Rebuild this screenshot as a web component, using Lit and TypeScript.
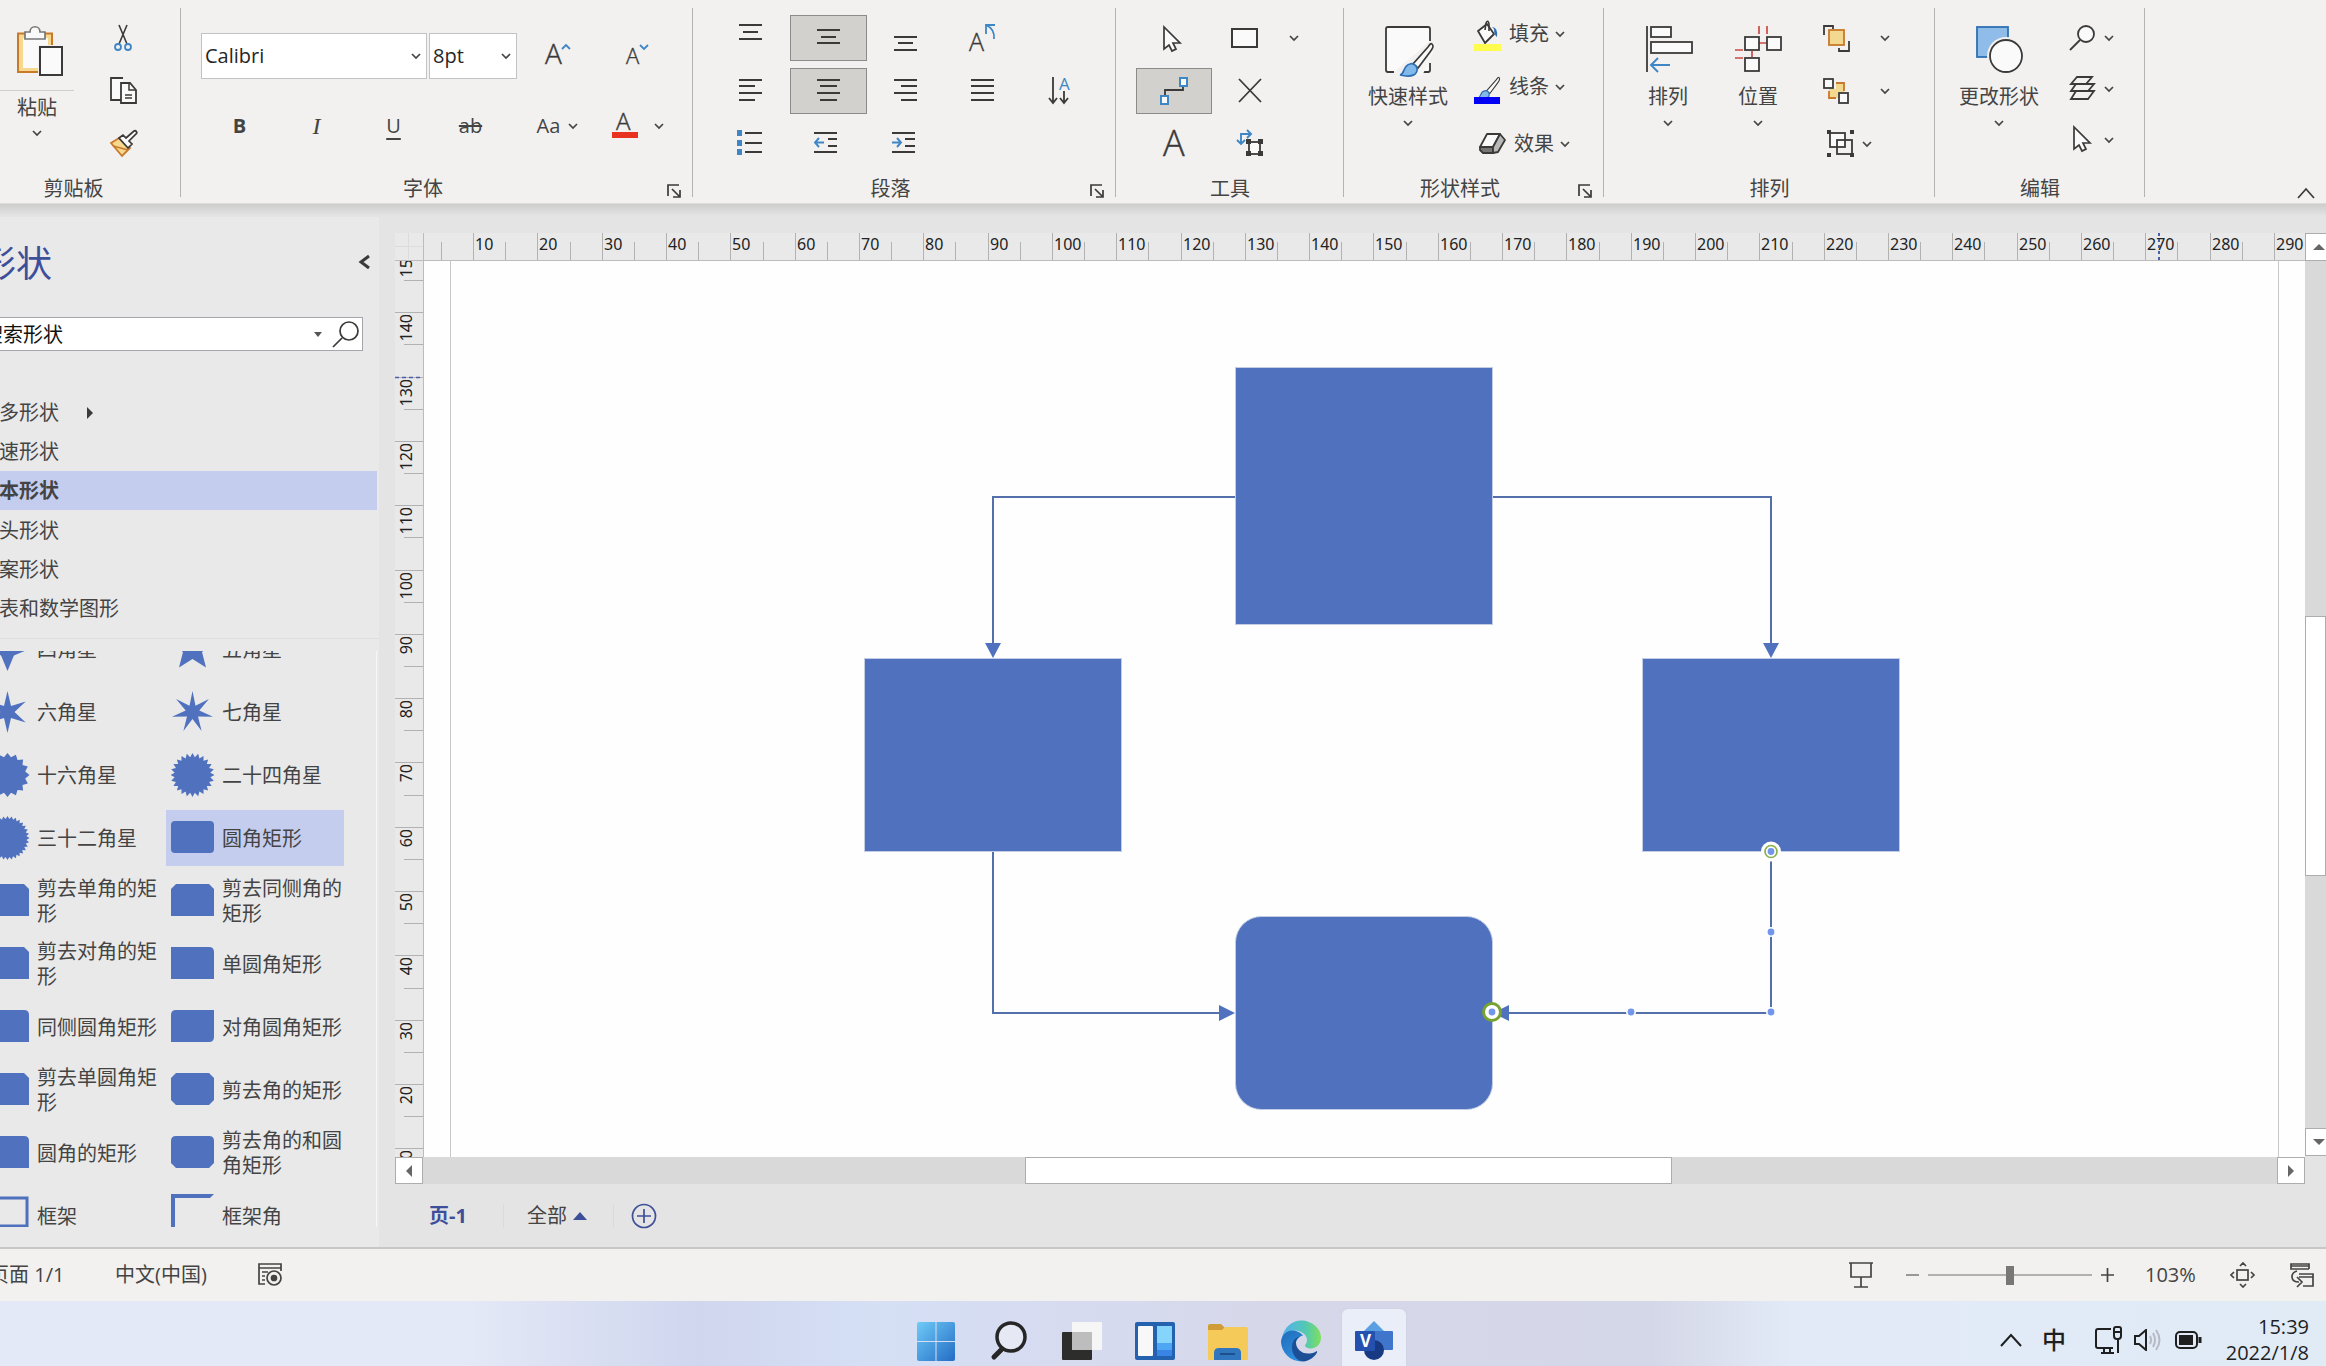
import { LitElement, html, svg, css, nothing, type SVGTemplateResult, type TemplateResult } from "lit";
import { customElement } from "lit/decorators.js";
import { classMap } from "lit/directives/class-map.js";

const icon = (w: number, h: number, body: SVGTemplateResult): TemplateResult =>
  html`<svg class="ic" width=${w} height=${h} viewBox="0 0 ${w} ${h}" aria-hidden="true">${body}</svg>`;

const chevron = html`<svg class="chev" width="12" height="8" viewBox="0 0 12 8" aria-hidden="true">
  <path d="M2 2L6 6L10 2" fill="none" stroke="#444" stroke-width="1.7" />
</svg>`;

const INK = "#3b3a39";
const BLUE = "#3f86c6";

/** Horizontal strokes given as [x1, x2, y] triples. */
const bars = (list: number[][]) => svg`<g stroke=${INK} stroke-width="2">
  ${list.map(([a, b, y]) => svg`<path d="M${a} ${y}H${b}" />`)}</g>`;

const pointer = (x: number, y: number) => svg`<path
  d="M${x} ${y}V${y + 22}L${x + 5} ${y + 18}L${x + 8} ${y + 24}L${x + 12} ${y + 22}L${x + 9} ${y + 16}H${x + 16}Z"
  fill="#fafafa" stroke=${INK} stroke-width="1.7" />`;

const brush = svg`
  <path d="M44 1C46 3 45 5 42 9L30 25L25 21L40 4C42 1 43 0 44 1Z" fill="#fafafa" stroke=${INK} stroke-width="1.7" />
  <path d="M29 25C30 31 25 35 12 32C17 31 15 22 22 21C25 20 28 22 29 25Z" fill="#83b9ea" stroke="#2f6fb3" stroke-width="1.7" />`;

const I = {
  paste: icon(74, 75, svg`
    <path d="M18 18.500H52V57H18Z" fill="#f6d88e" stroke="#c8792a" stroke-width="2" />
    <rect x="23" y="23" width="25" height="30" fill="#fafafa" />
    <rect x="38" y="30" width="28" height="34" fill="#f2f1ef" />
    <path d="M25 24V17H30C30 10 40 10 40 17H45V24Z" fill="#fafafa" stroke="#777" stroke-width="1.7" />
    <rect x="40" y="32" width="22" height="28" fill="#fafafa" stroke=${INK} stroke-width="2" />`),
  cut: icon(36, 36, svg`
    <path d="M14 5L22 24M22 5L14 24" stroke=${INK} stroke-width="1.6" />
    <circle cx="13" cy="27" r="3" fill="none" stroke=${BLUE} stroke-width="1.8" />
    <circle cx="23" cy="27" r="3" fill="none" stroke=${BLUE} stroke-width="1.8" />`),
  copy: icon(36, 36, svg`
    <path d="M16 27H6V5H18" fill="#fafafa" stroke=${INK} stroke-width="1.8" />
    <path d="M16 10H25L31 17V30H16Z" fill="#fafafa" stroke=${INK} stroke-width="1.8" />
    <path d="M24 10V17H31M20 22H27M20 25H27" fill="none" stroke=${INK} stroke-width="1.5" />`),
  painter: icon(36, 36, svg`
    <path d="M6 17L14 12L25 22L17 30Z" fill="#f6d88e" stroke="#c8792a" stroke-width="1.8" />
    <path d="M8 20L23 24" stroke="#c8792a" stroke-width="1.5" />
    <path d="M14 12L18 9L21 12L29 5C31 4 33 7 31 8L24 15L27 18L23 22Z" fill="#fafafa" stroke=${INK} stroke-width="1.7" />`),
  grow: icon(60, 46, svg`<text x="17" y="31" class="ga" font-size="28">A</text>
    <path d="M34 16L38 12L42 16" fill="none" stroke=${BLUE} stroke-width="1.8" />`),
  shrink: icon(60, 46, svg`<text x="19" y="31" class="ga" font-size="22">A</text>
    <path d="M33 12L37 16L41 12" fill="none" stroke=${BLUE} stroke-width="1.8" />`),
  fontColor: icon(36, 46, svg`<text x="9" y="27" class="ga" font-size="24">A</text>
    <rect x="5" y="29" width="26" height="6" fill="#e8321f" />`),
  alignTop: icon(76, 46, bars([[25, 48, 10], [29, 44, 17], [25, 48, 24]])),
  alignMid: icon(74, 44, bars([[25, 48, 14], [29, 44, 21], [25, 48, 27]])),
  alignBottom: icon(76, 46, bars([[26, 49, 22], [30, 45, 28], [26, 49, 35]])),
  rotateText: icon(76, 46, svg`<text x="24" y="36" class="ga" font-size="25">A</text>
    <path d="M50 10H41V19M41 10Q50 14 49 24" fill="none" stroke=${BLUE} stroke-width="1.8" />`),
  left: icon(76, 46, bars([[25, 48, 12], [25, 41, 18], [25, 48, 25], [25, 41, 32]])),
  center: icon(74, 44, bars([[25, 48, 11], [28, 45, 17], [25, 48, 24], [28, 45, 31]])),
  right: icon(76, 46, bars([[26, 49, 12], [33, 49, 18], [26, 49, 25], [33, 49, 32]])),
  justify: icon(76, 46, bars([[26, 49, 12], [26, 49, 18], [26, 49, 25], [26, 49, 32]])),
  sort: icon(76, 46, svg`
    <path d="M31 9V34M27 30L31 35L35 30M42 23V34M38 30L42 35L46 30" fill="none" stroke=${INK} stroke-width="1.8" />
    <text x="37" y="22" font-size="17" fill=${BLUE} class="fa">A</text>`),
  bullets: icon(76, 46, svg`<path d="M23 9h5v6h-5zM23 19h5v6h-5zM23 28h5v6h-5z" fill=${BLUE} />
    ${bars([[31, 48, 12], [31, 48, 22], [31, 48, 31]])}`),
  outdent: icon(76, 46, svg`${bars([[23, 46, 12], [37, 46, 18], [37, 46, 25], [23, 46, 31]])}
    <path d="M33 21.500H25M28 17L24 21.500L28 26" fill="none" stroke=${BLUE} stroke-width="1.9" />`),
  indent: icon(76, 46, svg`${bars([[24, 47, 12], [37, 47, 18], [37, 47, 25], [24, 47, 31]])}
    <path d="M24 21.500H32M29 17L33 21.500L29 26" fill="none" stroke=${BLUE} stroke-width="1.9" />`),
  arrow: icon(76, 46, pointer(28, 12)),
  rect: icon(76, 46, svg`<rect x="20" y="14" width="25" height="18" fill="#fafafa" stroke=${INK} stroke-width="2" />`),
  connector: icon(74, 44, svg`<path d="M46 17V21H28V27" fill="none" stroke=${INK} stroke-width="1.8" />
    <rect x="43" y="9" width="7" height="8" fill="#fafafa" stroke=${BLUE} stroke-width="2" />
    <rect x="24" y="27" width="7" height="8" fill="#fafafa" stroke=${BLUE} stroke-width="2" />`),
  cross: icon(76, 46, svg`<path d="M27 11L49 34M49 11L27 34" stroke=${INK} stroke-width="1.8" />`),
  text: icon(76, 46, svg`<text x="27" y="35" class="ga" font-size="36">A</text>`),
  points: icon(76, 46, svg`
    <path d="M29 22V13H38M35 9L39 13L35 17M25 19L29 23L33 19" fill="none" stroke=${BLUE} stroke-width="1.9" />
    <rect x="37" y="21" width="11" height="12" fill="#fafafa" stroke=${INK} stroke-width="1.8" />
    <path d="M34 18h5v5h-5zM46 18h5v5h-5zM34 30h5v5h-5zM46 30h5v5h-5z" fill=${INK} />`),
  quick: icon(84, 67, svg`
    <path d="M28 57H22Q20 57 20 55V14Q20 12 22 12H62Q64 12 64 14V26M64 48V55Q64 57 62 57H52" fill="#fafafa" stroke=${INK} stroke-width="1.8" />
    <g transform="translate(22 28)"><path d="M40 2L24 20L10 33H34L46 8Z" fill="#f6f6f5" />${brush}</g>`),
  fill: icon(28, 36, svg`
    <path d="M4 16L13 9L20 19L11 28Z" fill="#fafafa" stroke=${INK} stroke-width="1.8" stroke-linejoin="round" />
    <path d="M11 15L12 8Q14 4 15 9V16" fill="none" stroke=${INK} stroke-width="1.6" />
    <path d="M18 12Q24 12 23 22Q20 20 20 14Z" fill="#2f6fb3" />
    <rect x="0" y="29" width="27" height="7" fill="#fffc4e" />`),
  line: icon(28, 36, svg`
    <g transform="translate(-4 9) scale(.66)">${brush}</g>
    <rect x="0" y="29" width="26" height="7" fill="#0000f5" />`),
  effect: icon(28, 28, svg`
    <path d="M8 4H21L14 17H1Z" fill="#fafafa" stroke=${INK} stroke-width="1.8" stroke-linejoin="round" />
    <path d="M1 17H14V23H4L1 20Z" fill="#777" stroke=${INK} stroke-width="1.8" stroke-linejoin="round" />
    <path d="M21 4L26 10L19 22L14 23V17Z" fill="#b8b8b8" stroke=${INK} stroke-width="1.8" stroke-linejoin="round" />`),
  align: icon(60, 67, svg`
    <path d="M9 11V57" stroke=${INK} stroke-width="1.8" />
    <rect x="13" y="12" width="20" height="10" fill="#fafafa" stroke=${INK} stroke-width="1.8" />
    <rect x="13" y="27" width="41" height="11" fill="#fafafa" stroke=${INK} stroke-width="1.8" />
    <path d="M32 50H13M20 43L13 50L20 57" fill="none" stroke=${BLUE} stroke-width="1.9" />`),
  position: icon(60, 67, svg`
    <path d="M31 11V19M39 11V19M31 28H39M7 35H15M7 43H15M24 36V42" stroke="#cc4b46" stroke-width="1.7" fill="none" />
    <g fill="#fafafa" stroke=${INK} stroke-width="1.8"><rect x="17" y="22" width="14" height="13" />
    <rect x="39" y="22" width="14" height="13" /><rect x="17" y="43" width="14" height="13" /></g>`),
  front: icon(36, 46, svg`
    <path d="M6 20V11H15V14M31 26V36H21V33" fill="none" stroke=${INK} stroke-width="1.8" />
    <rect x="11" y="15" width="15" height="15" fill="#f3d88f" stroke="#c8792a" stroke-width="1.8" />`),
  back: icon(36, 46, svg`
    <path d="M18 15H26V25H20V30H11V21H18Z" fill="#f3d88f" /><path d="M18 15H26V23M18 30H11V23" fill="none" stroke="#c8792a" stroke-width="1.8" />
    <rect x="6" y="11" width="9" height="9" fill="#fafafa" stroke=${INK} stroke-width="1.8" />
    <rect x="21" y="25" width="9" height="10" fill="#fafafa" stroke=${INK} stroke-width="1.8" />`),
  group: icon(36, 46, svg`
    <rect x="12" y="12" width="15" height="14" fill="#fafafa" stroke=${INK} stroke-width="1.8" />
    <rect x="19" y="19" width="15" height="14" fill="none" stroke=${INK} stroke-width="1.8" />
    <path d="M9 9h4v4h-4zM32 9h4v4h-4zM9 32h4v4h-4zM32 32h4v4h-4z" fill=${INK} />`),
  change: icon(90, 67, svg`
    <rect x="23" y="12" width="31" height="30" fill="#8fbce8" stroke="#2f6fb3" stroke-width="1.8" />
    <circle cx="52" cy="41" r="19" fill="#f2f1ef" /><circle cx="52" cy="41" r="16" fill="#fafafa" stroke=${INK} stroke-width="1.8" />`),
  find: icon(30, 46, svg`<circle cx="18" cy="19" r="8" fill="#fafafa" stroke=${INK} stroke-width="1.8" />
    <path d="M12 25L2 35" stroke=${INK} stroke-width="1.8" />`),
  layers: icon(30, 46, svg`<g fill="#f2f1ef" stroke=${INK} stroke-width="1.8">
    <path d="M8 25H26L20 33H3Z" /><path d="M8 18H26L20 25H3Z" /><path d="M9 11H24L18 18H3Z" /></g>`),
  select: icon(30, 46, pointer(6, 10)),
  launcher: icon(14, 14, svg`<path d="M1 12V1H12M5 5L12 12M13 6V13H6" fill="none" stroke=${INK} stroke-width="1.7" />`),
  up: icon(18, 12, svg`<path d="M1 11L9 2L17 11" fill="none" stroke=${INK} stroke-width="1.7" />`),
  glass: icon(28, 28, svg`<circle cx="17" cy="11" r="9" fill="none" stroke="#3b3a39" stroke-width="1.7" />
    <path d="M10 18L1 27" stroke="#3b3a39" stroke-width="1.7" />`),
};

/** Points of an n-pointed star centred in a 44px box. */
const star = (n: number, outer: number, inner: number) => {
  const pts: string[] = [];
  for (let i = 0; i < n * 2; i++) {
    const r = i % 2 ? inner : outer;
    const a = (Math.PI * i) / n - Math.PI / 2;
    pts.push(`${(21.5 + r * Math.cos(a)).toFixed(1)},${(22 + r * Math.sin(a)).toFixed(1)}`);
  }
  return svg`<polygon points=${pts.join(" ")} />`;
};
const outline = (d: string) => svg`<path d=${d} />`;

const SHAPES: { name: string; art: SVGTemplateResult; selected?: boolean }[] = [
  { name: "四角星", art: star(4, 22, 9) },
  { name: "五角星", art: star(5, 23, 10) },
  { name: "六角星", art: star(6, 21, 7) },
  { name: "七角星", art: star(7, 21, 7) },
  { name: "十六角星", art: star(16, 22, 18) },
  { name: "二十四角星", art: star(24, 22, 18) },
  { name: "三十二角星", art: star(32, 22, 19) },
  { name: "圆角矩形", art: svg`<rect x="0" y="5" width="43" height="32" rx="4" />`, selected: true },
  { name: "剪去单角的矩形", art: outline("M0 5H38L43 10V37H0Z") },
  { name: "剪去同侧角的矩形", art: outline("M5 5H38L43 10V37H0V10Z") },
  { name: "剪去对角的矩形", art: outline("M0 5H38L43 10V37H5L0 32Z") },
  { name: "单圆角矩形", art: outline("M0 5H38Q43 5 43 10V37H0Z") },
  { name: "同侧圆角矩形", art: outline("M0 10Q0 5 5 5H38Q43 5 43 10V37H0Z") },
  { name: "对角圆角矩形", art: outline("M5 5H43V32Q43 37 38 37H0V10Q0 5 5 5Z") },
  { name: "剪去单圆角矩形", art: outline("M5 5H38L43 10V37H0V10Q0 5 5 5Z") },
  { name: "剪去角的矩形", art: outline("M5 5H38L43 10V32L38 37H5L0 32V10Z") },
  { name: "圆角的矩形", art: outline("M5 5H38Q43 5 43 10V37H0V10Q0 5 5 5Z") },
  { name: "剪去角的和圆角矩形", art: outline("M5 5H38Q43 5 43 10V32L38 37H5L0 32V10Q0 5 5 5Z") },
  { name: "框架", art: svg`<rect x="1" y="4" width="40" height="28" fill="none" stroke="#4f71be" stroke-width="3" />` },
  { name: "框架角", art: outline("M0 0H43L39 4H4V40L0 44Z") },
];

const CATEGORIES = ["更多形状", "快速形状", "基本形状", "箭头形状", "图案形状", "图表和数学图形"];

const PITCH = 64.31;

@customElement("visio-ribbon")
class VisioRibbon extends LitElement {
  static styles = css`
    :host { display: block; background: #f2f1ef; border-bottom: 1px solid #dcdbd9; color: #444;
      font: 20px/24px "Open Sans", "Noto Sans CJK SC", sans-serif; }
    .ribbon { display: flex; height: 203px; }
    button { border: 0; background: none; padding: 0; margin: 0; color: inherit; font: inherit; display: flex;
      align-items: center; justify-content: center; box-sizing: border-box; }
    svg { display: block; flex: none; overflow: visible; }
    .group { flex: none; box-sizing: border-box; display: flex; flex-direction: column; padding-top: 15px;
      background: linear-gradient(#b4b4b4, #b4b4b4) right 8px / 1px 189px no-repeat; }
    .body { flex: 1; display: flex; align-items: flex-start; }
    .foot { display: flex; height: 28px; align-items: center; }
    .foot span { flex: 1; text-align: center; }
    .foot button { width: 28px; height: 28px; padding: 4px 10px 0 0; }
    .clip { width: 181px; } .clip .foot { padding-right: 34px; }
    .font { width: 512px; } .para { width: 423px; } .tools { width: 228px; }
    .style { width: 260px; } .arrange { width: 331px; } .edit { width: 210px; }
    .para .body, .tools .body { padding-left: 20px; }
    .style .body { padding-left: 22px; } .arrange .body { padding-left: 34px; } .edit .body { padding-left: 19px; }
    .big { flex-direction: column; }
    .big span { line-height: 30px; white-space: nowrap; }
    .big .chev { margin: 7px 0; }
    .paste { width: 74px; }
    .paste .ic { border-bottom: 1px solid #cfcfcf; }
    .paste span { line-height: 34px; }
    .paste .chev { margin: 4px 0; }
    .three { display: grid; grid-auto-rows: 46px; row-gap: 7px; }
    .clip .three { width: 50px; margin-left: 24px; }
    .pgrid { grid-template-columns: repeat(5, 77px); }
    .pgrid button { width: 77px; height: 46px; }
    .on { background: #d2d1ce; border: 1px solid #8c8b89; }
    .tgrid { grid-template-columns: 76px 76px 12px; }
    .rows { display: flex; flex-direction: column; gap: 24px; padding: 18px 0 0 20px; }
    .row { display: flex; height: 46px; align-items: center; }
    .combo { display: grid; margin-right: 2px; }
    .combo select, .combo .chev { grid-area: 1 / 1; }
    .combo .chev { justify-self: end; align-self: center; margin-right: 5px; }
    select { appearance: none; height: 46px; border: 1px solid #c3c3c3; border-radius: 0; background: #fff; color: #262626;
      padding: 0 3px; font: inherit; font-size: 20px; }
    .face select { width: 226px; } .size select { width: 88px; }
    .gap { width: 9px; } .gap2 { width: 19px; }
    .row .b { width: 77px; height: 46px; }
    .bold { font-weight: 700; } .ital { font-family: "Liberation Serif", serif; font-style: italic; font-size: 24px; }
    .under { text-decoration: underline; text-underline-offset: 5px; text-decoration-thickness: 2px; }
    .strike { text-decoration: line-through; }
    .case { width: 60px; gap: 7px; }
    .drop { width: 18px; height: 46px; margin-left: 7px; }
    .ga { font-family: "Open Sans", sans-serif; font-weight: 300; fill: #3b3a39; stroke: #3b3a39; stroke-width: 0.4px; }
    .fa { font-family: "Open Sans", sans-serif; }
    .side { margin-left: 24px; }
    .side button { justify-content: flex-start; }
    .lab { align-items: flex-start; gap: 5px; }
    .lab span { margin-left: 2px; line-height: 38px; }
    .lab .chev { margin-top: 15px; }
    .lab.mid { align-items: center; padding-left: 5px; }
    .lab.mid .chev { margin-top: 0; }
    .a2 { margin-left: 30px; }
    .wide { gap: 25px; } .near { gap: 7px; } .five { gap: 5px; }
    .rest { flex: 1; display: flex; justify-content: flex-end; align-items: flex-end; padding: 0 11px 4px 0; }
    .w84 { width: 84px; } .w60 { width: 60px; } .w90 { width: 90px; }
    .edit .three { row-gap: 5px; }
  `;

  private btn(label: string, body: unknown, cls = "") {
    return html`<button class=${cls} aria-label=${label} title=${label}>${body}</button>`;
  }
  private foot(name: string, launcher = false) {
    return html`<div class="foot"><span>${name}</span>${launcher ? this.btn(name + "设置", I.launcher) : nothing}</div>`;
  }

  render() {
    const b = this.btn.bind(this);
    return html`<div class="ribbon" role="toolbar">
      <section class="group clip">
        <div class="body">
          <button class="big paste">${I.paste}<span>粘贴</span>${chevron}</button>
          <div class="three">${b("剪切", I.cut)}${b("复制", I.copy)}${b("格式刷", I.painter)}</div>
        </div>
        ${this.foot("剪贴板")}
      </section>
      <section class="group font">
        <div class="body"><div class="rows">
          <div class="row">
            <label class="combo face"><select aria-label="字体"><option>Calibri</option></select>${chevron}</label>
            <label class="combo size"><select aria-label="字号"><option>8pt</option></select>${chevron}</label>
            <span class="gap"></span>${b("增大字号", I.grow)}<span class="gap2"></span>${b("减小字号", I.shrink)}
          </div>
          <div class="row">
            ${b("加粗", "B", "b bold")}${b("倾斜", "I", "b ital")}${b("下划线", "U", "b under")}${b("删除线", "ab", "b strike")}
            <span class="gap2"></span>${b("更改大小写", html`Aa${chevron}`, "case")}<span class="gap2"></span>
            ${b("字体颜色", I.fontColor)}${b("颜色选项", chevron, "drop")}
          </div>
        </div></div>
        ${this.foot("字体", true)}
      </section>
      <section class="group para">
        <div class="body"><div class="three pgrid">
          ${b("顶端对齐", I.alignTop)}${b("中部对齐", I.alignMid, "on")}${b("底端对齐", I.alignBottom)}${b("旋转文本", I.rotateText)}<span></span>
          ${b("左对齐", I.left)}${b("居中", I.center, "on")}${b("右对齐", I.right)}${b("两端对齐", I.justify)}${b("文字方向", I.sort)}
          ${b("项目符号", I.bullets)}${b("减少缩进", I.outdent)}${b("增加缩进", I.indent)}
        </div></div>
        ${this.foot("段落", true)}
      </section>
      <section class="group tools">
        <div class="body"><div class="three tgrid">
          ${b("指针工具", I.arrow)}${b("矩形", I.rect)}${b("更多绘图工具", chevron)}
          ${b("连接线", I.connector, "on")}${b("删除", I.cross)}<span></span>
          ${b("文本", I.text)}${b("连接点", I.points)}
        </div></div>
        ${this.foot("工具")}
      </section>
      <section class="group style">
        <div class="body">
          <button class="big w84">${I.quick}<span>快速样式</span>${chevron}</button>
          <div class="three side">
            <button class="lab">${I.fill}<span>填充</span>${chevron}</button>
            <button class="lab">${I.line}<span>线条</span>${chevron}</button>
            <button class="lab mid">${I.effect}<span>效果</span>${chevron}</button>
          </div>
        </div>
        ${this.foot("形状样式", true)}
      </section>
      <section class="group arrange">
        <div class="body">
          <button class="big w60">${I.align}<span>排列</span>${chevron}</button>
          <button class="big w60 a2">${I.position}<span>位置</span>${chevron}</button>
          <div class="three side a2">
            ${b("置于顶层", html`${I.front}${chevron}`, "wide")}${b("置于底层", html`${I.back}${chevron}`, "wide")}
            ${b("组合", html`${I.group}${chevron}`, "near")}
          </div>
        </div>
        ${this.foot("排列")}
      </section>
      <section class="group edit">
        <div class="body">
          <button class="big w90">${I.change}<span>更改形状</span>${chevron}</button>
          <div class="three side">
            ${b("查找", html`${I.find}${chevron}`, "five")}${b("图层", html`${I.layers}${chevron}`, "five")}
            ${b("选择", html`${I.select}${chevron}`, "five")}
          </div>
        </div>
        ${this.foot("编辑")}
      </section>
      <div class="rest">${b("折叠功能区", I.up)}</div>
    </div>`;
  }
}

@customElement("shape-panel")
class ShapePanel extends LitElement {
  static styles = css`
    :host { display: block; flex: none; width: 379px; margin-top: 13px; background: #e9e9e9; overflow: hidden; color: #444;
      font: 20px/25px "Open Sans", "Noto Sans CJK SC", sans-serif; }
    .inner { height: 100%; margin-left: -22px; display: flex; flex-direction: column; }
    button { border: 0; background: none; padding: 0; color: inherit; font: inherit; display: flex; align-items: center; text-align: left; }
    svg { display: block; flex: none; }
    .head { height: 94px; display: flex; align-items: center; justify-content: space-between; padding: 0 7px 0 2px; }
    .head button { height: 20px; align-items: flex-start; }
    h2 { margin: 0; font-size: 36px; line-height: 40px; font-weight: 400; color: #3e4f9a; }
    .search { display: flex; align-items: center; height: 32px; margin: 6px 16px 0 0; background: #fff; border: 1px solid #a5a5ab; padding: 0 2px 0 4px; }
    input { flex: 1; min-width: 0; border: 0; outline: 0; padding: 0; background: none; color: #111; font: inherit; }
    .search svg { margin-left: 10px; }
    .cats { list-style: none; margin: 42px 2px 10px 0; padding: 0; }
    .cats button { height: 39px; width: 100%; padding-left: 1px; gap: 28px; }
    .cats .sel { background: #c4cdee; font-weight: 700; margin-bottom: 1px; }
    .list { flex: 1; min-height: 0; overflow: hidden; border-right: 1px solid #f6f6f6; margin: 12px 2px 20px 0; }
    .rule { border-top: 1px solid #dedede; }
    .grid { display: grid; grid-template-columns: 178px 178px; grid-auto-rows: 56px; gap: 7px; margin: -30px 0 0 3px; }
    .grid button { padding-left: 5px; gap: 7px; }
    .grid .sel { background: #c4cdee; }
    .grid svg { fill: #4f71be; }
    .grid span { flex: 1; }
  `;
  render() {
    return html`<div class="inner">
      <div class="head"><h2>形状</h2><button aria-label="折叠">
        <svg width="16" height="16" viewBox="0 0 16 16"><path d="M13 2L5 8L13 14" fill="none" stroke="#3b3a39" stroke-width="3" /></svg></button></div>
      <div class="search"><input aria-label="搜索形状" value="搜索形状" />
        <svg width="8" height="5" viewBox="0 0 8 5"><path d="M0 0H8L4 5Z" fill="#555" /></svg>
        <button aria-label="搜索">${I.glass}</button></div>
      <ul class="cats">${CATEGORIES.map((c, i) => html`<li><button class=${classMap({ sel: i === 2 })}>${c}${i === 0
        ? html`<svg width="6" height="12" viewBox="0 0 6 12"><path d="M0 0L6 6L0 12Z" fill="#3b3a39" /></svg>` : nothing}</button></li>`)}</ul>
      <div class="rule"></div>
      <div class="list"><div class="grid">${SHAPES.map((s) => html`<button class=${classMap({ sel: !!s.selected })}>
        <svg width="44" height="44" viewBox="0 0 44 44">${s.art}</svg><span>${s.name}</span></button>`)}</div></div>
    </div>`;
  }
}

@customElement("drawing-area")
class DrawingArea extends LitElement {
  static styles = css`
    :host { display: grid; flex: 1; min-width: 0; margin: 29px 0 0 16px; grid-template: 28px 1fr 27px 63px / 29px 1fr 21px;
      font: 20px/24px "Open Sans", "Noto Sans CJK SC", sans-serif; color: #444; }
    svg { display: block; overflow: hidden; }
    .ruler { background: #e9e9e9; box-sizing: border-box; width: 100%; height: 100%; font: 16px "Noto Sans", sans-serif; fill: #222; }
    .page { background: #fefefe; width: 100%; height: 100%; }
    .cell { min-width: 0; min-height: 0; overflow: hidden; }
    .track { display: flex; background: #d9d9d9; }
    .v { flex-direction: column; grid-row: 1 / 3; grid-column: 3; margin-bottom: 1px; }
    .h { grid-column: 1 / 3; grid-row: 3; }
    .track button, .thumb { box-sizing: border-box; background: #fff; border: 1px solid #adadad; padding: 0; }
    .track button { flex: none; display: grid; place-items: center; width: 28px; height: 27px; }
    .v button { width: 28px; height: 28px; }
    .v { overflow: hidden; }
    .v .rail, .h .rail { flex: 1; display: flex; }
    .v .rail { flex-direction: column; }
    .tabs { grid-column: 1 / 4; display: flex; align-items: center; padding-left: 34px; }
    .tabs button { border: 0; background: none; padding: 0; font: inherit; color: inherit; display: flex; align-items: center; gap: 6px; }
    .tabs .cur { color: #3e4f9a; font-weight: 700; }
    .bar { width: 1px; height: 24px; background: #dadada; }
    .one { width: 74px; } .all { margin-left: 23px; width: 86px; } .add { margin-left: 17px; }
  `;

  private hTicks() {
    return Array.from({ length: 60 }, (_, i) => {
      const x = Math.round(17 + i * (PITCH / 2));
      return i % 2
        ? svg`<path d="M${x}.5 0V28" stroke="#b2b2b2" /><text x=${x + 2} y="17">${((i + 1) / 2) * 10}</text>`
        : svg`<path d="M${x}.5 9V28" stroke="#b2b2b2" />`;
    });
  }
  private vTicks() {
    return Array.from({ length: 29 }, (_, i) => {
      const y = Math.round(-13 + i * (PITCH / 2));
      return i % 2
        ? svg`<path d="M9 ${y}.5H28" stroke="#b2b2b2" />`
        : svg`<path d="M0 ${y}.5H28" stroke="#b2b2b2" />
          <text transform="translate(17 ${y + 2}) rotate(-90)" text-anchor="end">${150 - i * 5}</text>`;
    });
  }
  private tri(d: string) {
    return html`<svg width="12" height="12" viewBox="0 0 12 12"><path d=${d} fill="#666" /></svg>`;
  }
  private handle(x: number, y: number) {
    return svg`<circle cx=${x} cy=${y} r="5" fill="#fff" /><circle cx=${x} cy=${y} r="3.400" fill="#7196ea" />`;
  }

  render() {
    return html`
      <svg class="ruler" viewBox="0 0 29 28"><path d="M13.500 0V28M0 13.500H29" stroke="#dcdcdc" /><path d="M28.500 0V28M0 27.500H29" stroke="#bcbcbc" /></svg>
      <div class="cell"><svg class="ruler">${this.hTicks()}<path d="M0 27.500H2400" stroke="#bcbcbc" />
        <path d="M1735 0V28" stroke="#4a5fa8" stroke-width="2" stroke-dasharray="3 3" /></svg></div>
      <div class="track v"><button aria-label="向上">${this.tri("M0 9L6 3L12 9Z")}</button>
        <div class="rail"><div style="flex:356"></div><div class="thumb" style="flex:259"></div><div style="flex:253"></div></div>
        <button aria-label="向下">${this.tri("M0 3L6 9L12 3Z")}</button></div>
      <div class="cell"><svg class="ruler">${this.vTicks()}<path d="M28.500 0V2000" stroke="#bcbcbc" />
        <path d="M0 116.500H28" stroke="#4a5fa8" stroke-width="1.500" stroke-dasharray="4 3" /></svg></div>
      <div class="cell"><svg class="page"><g transform="translate(-424 -261)">
        <path d="M450.500 261V1400M2278.500 261V1400" stroke="#c8c8c8" />
        <g fill="#4f71be" stroke="#c3cee6">
          <rect x="1235.500" y="367.500" width="257" height="257" />
          <rect x="864.500" y="658.500" width="257" height="193" />
          <rect x="1642.500" y="658.500" width="257" height="193" />
          <rect x="1235.500" y="916.500" width="257" height="193" rx="26" />
        </g>
        <g fill="none" stroke="#5470ab" stroke-width="2">
          <path d="M1235 497H993V646" /><path d="M1493 497H1771V646" />
          <path d="M993 852V1013H1222" /><path d="M1771 852V1013H1506" />
        </g>
        <g fill="#4f71be">
          <path d="M985 643H1001L993 658Z" /><path d="M1763 643H1779L1771 658Z" />
          <path d="M1219 1005V1021L1235 1013Z" /><path d="M1509 1005V1021L1493 1013Z" />
        </g>
        <circle cx="1771" cy="851.500" r="10" fill="#fff" /><circle cx="1771" cy="851.500" r="6" fill="#fff" stroke="#8bb04f" stroke-width="1.700" />
        ${this.handle(1771, 932)}${this.handle(1771, 1012)}${this.handle(1631, 1012)}
        <circle cx="1771" cy="851.500" r="3.400" fill="#7196ea" />
        <circle cx="1492" cy="1012" r="8.500" fill="#fff" stroke="#76a232" stroke-width="3" /><circle cx="1492" cy="1012" r="3.400" fill="#7196ea" />
      </g></svg></div>
      <div class="track h"><button aria-label="向左">${this.tri("M9 0L3 6L9 12Z")}</button>
        <div class="rail"><div style="flex:602"></div><div class="thumb" style="flex:646"></div><div style="flex:605"></div></div>
        <button aria-label="向右">${this.tri("M3 0L9 6L3 12Z")}</button></div>
      <div></div>
      <div class="tabs"><button class="one cur">页-1</button><span class="bar"></span>
        <button class="all">全部<svg width="14" height="8" viewBox="0 0 14 8"><path d="M0 8L7 0L14 8Z" fill="#3e4f9a" /></svg></button>
        <span class="bar"></span>
        <button class="add" aria-label="插入页"><svg width="26" height="26" viewBox="0 0 26 26"><circle cx="13" cy="13" r="11.500" fill="none" stroke="#3e4f9a" stroke-width="1.700" /><path d="M13 6V20M6 13H20" stroke="#3e4f9a" stroke-width="1.700" /></svg></button></div>`;
  }
}

@customElement("status-bar")
class StatusBar extends LitElement {
  static styles = css`
    :host { display: flex; align-items: center; height: 52px; border-top: 2px solid #c8c7c6; background: #f2f1ef; color: #444;
      font: 20px/24px "Open Sans", "Noto Sans CJK SC", sans-serif; }
    span { white-space: nowrap; }
    button { border: 0; background: none; padding: 0; display: block; }
    svg { display: block; fill: none; stroke: #444; stroke-width: 1.7px; }
    .pg { margin-left: -11px; width: 126px; } .lang { width: 142px; }
    .grow { flex: 1; }
    .show { margin-right: 32px; } .minus { margin-right: 9px; } .plus { margin-left: 9px; }
    .pct { width: 52px; margin: 0 33px 0 31px; } .fit { margin-right: 33px; } .sw { margin-right: 11px; }
    input { appearance: none; width: 164px; height: 20px; margin: 0; background: linear-gradient(#b0b0b0, #b0b0b0) center / 100% 2px no-repeat; }
    input::-webkit-slider-thumb { appearance: none; width: 8px; height: 19px; background: #777; }
  `;
  render() {
    return html`
      <span class="pg">页面 1/1</span><span class="lang">中文(中国)</span>
      <button aria-label="宏录制"><svg width="26" height="26" viewBox="0 0 26 26"><path d="M8 22H2V2H24V9M2 6H24M5 10H11M5 14H8M5 18H8" /><circle cx="17" cy="16" r="7" /><circle cx="17" cy="16" r="2.500" fill="#444" /></svg></button>
      <span class="grow"></span>
      <button class="show" aria-label="演示模式"><svg width="26" height="26" viewBox="0 0 26 26"><path d="M1 1H25M3 1V15H23V1M13 15V25M6 25H20" /></svg></button>
      <button class="minus" aria-label="缩小"><svg width="13" height="14" viewBox="0 0 13 14"><path d="M0 7H13" stroke="#888" /></svg></button>
      <input type="range" aria-label="缩放" min="0" max="200" value="100" />
      <button class="plus" aria-label="放大"><svg width="13" height="14" viewBox="0 0 13 14"><path d="M0 7H13M6.500 0V14" /></svg></button>
      <span class="pct">103%</span>
      <button class="fit" aria-label="适应窗口"><svg width="26" height="26" viewBox="0 0 26 26"><rect x="7" y="8" width="11" height="10" /><path d="M10 4L13 1L16 4M10 22L13 25L16 22M4 10L1 13L4 16M21 10L24 13L21 16" /></svg></button>
      <button class="sw" aria-label="切换窗口"><svg width="26" height="26" viewBox="0 0 26 26"><path d="M20 7V2H2V7H20M2 4H20M10 12H24V24H14M10 15H24M8 9C1 11 1 20 10 20M8 15L13 20L8 25" /></svg></button>`;
  }
}

@customElement("task-bar")
class TaskBar extends LitElement {
  static styles = css`
    :host { display: grid; grid-template-columns: 1fr auto 1fr; height: 65px; color: #1f1f1f; font: 20px/26px "Open Sans", "Noto Sans CJK SC", sans-serif;
      background: linear-gradient(90deg, #e3e9f6 0%, #e3e9f6 20%, #d0d6ee 30%, #d5e0f5 38%, #d6dcf2 43%, #d6d8e9 55%, #d4d7e7 71%, #e2eaf7 77%, #e0ebf6 100%); }
    .apps { display: flex; gap: 9px; padding: 8px 16px 0 0; }
    button { border: 0; background: none; padding: 0; display: grid; place-items: center; font: inherit; color: inherit; }
    .apps button { width: 64px; height: 64px; }
    .apps .cur { background: #eaeef8; border-radius: 6px 6px 0 0; box-shadow: 0 0 2px #c6cbdc; }
    svg { display: block; }
    .tray { display: flex; justify-content: flex-end; align-items: center; padding: 13px 17px 0 0; }
    .line { fill: none; stroke: #1f1f1f; stroke-width: 2px; }
    .clock { text-align: right; width: 90px; display: block; margin-left: 17px; }
    .ime { font-size: 24px; font-weight: 500; margin-right: 28px; } .more { margin-right: 20px; } .net { margin-right: 12px; } .vol { margin-right: 13px; }
    .v { font: 700 17px "Open Sans", sans-serif; fill: #fff; }
    .apps { min-height: 0; overflow: hidden; }
    .tray { min-height: 0; }
  `;
  render() {
    return html`<div></div>
      <div class="apps">
        <button aria-label="开始"><svg width="40" height="40" viewBox="0 0 40 40">
          <defs><linearGradient id="w" x1="0" y1="0" x2="1" y2="1"><stop offset="0" stop-color="#6fcbf7" /><stop offset="1" stop-color="#236cc5" /></linearGradient></defs>
          <path d="M3 1H19.500V20H1V3Q1 1 3 1ZM20.500 1H37Q39 1 39 3V20H20.500ZM1 21H19.500V40H3Q1 40 1 38ZM20.500 21H39V38Q39 40 37 40H20.500Z" fill="url(#w)" /></svg></button>
        <button aria-label="搜索"><svg width="40" height="40" viewBox="0 0 40 40"><circle cx="22" cy="16" r="14" fill="#e6e8f4" stroke="#262626" stroke-width="3.500" /><path d="M13 28L5 36" stroke="#262626" stroke-width="5" stroke-linecap="round" /></svg></button>
        <button aria-label="任务视图"><svg width="40" height="40" viewBox="0 0 40 40"><rect x="0" y="11" width="30" height="28" rx="1" fill="#2d2d2b" /><rect x="10" y="1" width="30" height="28" rx="1" fill="#f6f6f6" /><rect x="10" y="11" width="20" height="18" fill="#bdbdbd" /></svg></button>
        <button aria-label="小组件"><svg width="40" height="40" viewBox="0 0 40 40"><rect x="0" y="1" width="40" height="38" rx="2" fill="#2461ae" /><rect x="3" y="5" width="15" height="30" rx="1" fill="#f8f8f8" /><rect x="22" y="5" width="15" height="17" fill="#84d4fb" /><rect x="22" y="22" width="15" height="7" fill="#4ea7f5" /><rect x="22" y="29" width="15" height="6" fill="#3a84e6" /></svg></button>
        <button aria-label="文件资源管理器"><svg width="40" height="40" viewBox="0 0 40 40"><path d="M0 10V5Q0 3 2 3H13L17 7V10Z" fill="#cf9c38" /><path d="M0 9H14L17 6H38Q40 6 40 8V38Q40 39 39 39H1Q0 39 0 38Z" fill="#f5ca58" /><path d="M6 39V32Q6 27 11 27H28Q33 27 33 32V39Z" fill="#2f76bf" /><path d="M12 33H27" stroke="#1c4f8c" stroke-width="2" /></svg></button>
        <button aria-label="浏览器"><svg width="40" height="42" viewBox="0 0 40 41">
          <defs><linearGradient id="e1"><stop offset="0.100" stop-color="#53b4e6" /><stop offset="0.600" stop-color="#52c8b4" /><stop offset="1" stop-color="#7fe05c" /></linearGradient>
          <linearGradient id="e2" x1="0" y1="0" x2="0.600" y2="1"><stop offset="0" stop-color="#1f6cb8" /><stop offset="1" stop-color="#2f8fe0" /></linearGradient></defs>
          <path d="M1 17C3 7 11 0 20 0C31 0 40 8 40 17C40 24 35 28 30 28C26 28 24 26.500 24 25C24 24 26 23 26 19.500C26 14 20 10 13 10C8 10 3.500 13 1 17Z" fill="url(#e1)" />
          <path d="M1 17C0 19 0 21 0 22C1 32 9 41 21 41C17 38 14 33 14 27C14 21 17 16 22 15C20 12 15 10 11 10C6 10 2 14 1 17Z" fill="url(#e2)" />
          <path d="M19 16C13 17 11 22 11 27C11 34 16 41 23 41C29 40 34 36 36 32C36.500 31 35.500 30.500 35 31C32 33 29 33 27 33C20 33 15 28 15 22C15 19 16.500 17 19 16Z" fill="#1c4f95" /></svg></button>
        <button class="cur" aria-label="Visio"><svg width="40" height="40" viewBox="0 0 40 40"><path d="M20 0L30 10L20 20L10 10Z" fill="#5b9fe3" /><rect x="20" y="10" width="19" height="19" rx="1" fill="#3f76cb" /><circle cx="20" cy="29" r="10" fill="#183a85" /><rect x="1" y="10" width="20" height="20" rx="1" fill="#2450ae" /><text class="v" x="6" y="26">V</text></svg></button>
      </div>
      <div class="tray">
        <button class="more" aria-label="隐藏的图标"><svg class="line" width="22" height="14" viewBox="0 0 22 14"><path d="M1 13L11 2L21 13" /></svg></button>
        <button class="ime" aria-label="输入法">中</button>
        <button class="net" aria-label="网络"><svg class="line" width="28" height="28" viewBox="0 0 28 28"><path d="M17 3H4Q2 3 2 5V20Q2 22 4 22H19M10 22V27M16 22V27M7 27H20M24 13V27" /><path d="M20 3Q20 1 22 1H25Q27 1 27 3V10Q27 13 24 13H23Q20 13 20 10ZM20 6H27" /></svg></button>
        <button class="vol" aria-label="音量"><svg class="line" width="28" height="22" viewBox="0 0 28 22"><path d="M1 7V15H5L12 21V1L5 7Z" /><path d="M16 7Q18 11 16 15M19 4Q23 11 19 18M22 1Q29 11 22 21" stroke="#b5bac4" /></svg></button>
        <button aria-label="电池"><svg class="line" width="27" height="18" viewBox="0 0 27 18"><rect x="1" y="1" width="21" height="16" rx="4" /><rect x="5" y="5" width="12" height="8" fill="#1f1f1f" /><path d="M25 6V12" stroke-width="3" /></svg></button>
        <button class="clock">15:39<br />2022/1/8</button>
      </div>`;
  }
}

@customElement("app-root")
class AppRoot extends LitElement {
  static styles = css`
    :host { display: block; }
    .app { height: 100vh; display: flex; flex-direction: column; overflow: hidden; background: #e4e4e4; }
    .main { flex: 1; min-height: 0; display: flex; background: linear-gradient(#cdcdcc, #e4e4e4 12px); }
  `;
  render() {
    return html`<div class="app">
      <visio-ribbon></visio-ribbon>
      <main class="main"><shape-panel></shape-panel><drawing-area></drawing-area></main>
      <status-bar></status-bar>
      <task-bar></task-bar>
    </div>`;
  }
}
